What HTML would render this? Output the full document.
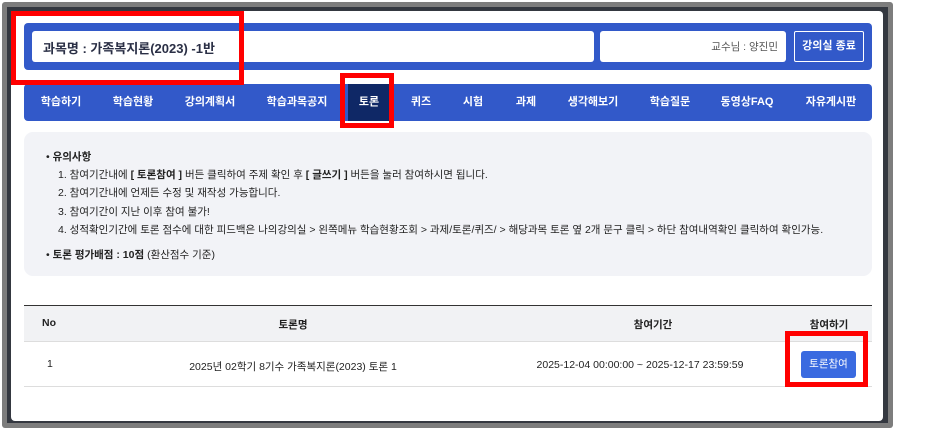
<!DOCTYPE html>
<html><head><meta charset="utf-8">
<style>
*{margin:0;padding:0;box-sizing:border-box}
body{width:934px;height:432px;background:#fff;position:relative;overflow:hidden;font-family:"Liberation Sans","Noto Sans CJK KR",sans-serif;color:#222}
.a{position:absolute}
.frame{left:2px;top:2px;width:891px;height:426px;background:#7d7d7d;border-radius:3px}
.dark{left:7px;top:7px;width:881px;height:416px;background:#343840}
.white{left:11px;top:11px;width:872px;height:410px;background:#fff;border-radius:4px}
.hdr{left:24px;top:23px;width:848px;height:47px;background:#3259c9;border-radius:4px}
.box{background:#fff;border-radius:3px;top:31px;height:31px}
.nav{left:24px;top:84px;width:848px;height:37px;background:#3259c9;border-radius:4px}
.ni{top:84px;height:37px;line-height:37px;color:#fff;font-size:11px;font-weight:bold;transform:translateX(-50%);white-space:nowrap}
.note{left:24px;top:132px;width:848px;height:144px;background:#f2f3f7;border-radius:9px}
.t{font-size:10.5px;white-space:nowrap;color:#222}
.red{border:5px solid #f00}
</style></head><body>
<div class="a frame"></div><div class="a dark"></div><div class="a white"></div>
<div class="a hdr"></div>
<div class="a box" style="left:32px;width:562px"></div>
<div class="a" style="left:43px;top:38px;font-size:13px;font-weight:bold;color:#2a2f45">과목명 : 가족복지론(2023) -1반</div>
<div class="a box" style="left:600px;width:186px"></div>
<div class="a" style="left:690px;top:39px;width:88px;text-align:right;font-size:10.5px;color:#555">교수님 : 양진민</div>
<div class="a" style="left:794px;top:31px;width:70px;height:31px;border:1px solid #fff;border-radius:2px;color:#fff;font-size:11px;font-weight:bold;text-align:center;line-height:29px">강의실 종료</div>
<div class="a nav"></div>
<div class="a" style="left:348px;top:84px;width:42px;height:37px;background:#0f2866"></div>
<div class="a ni" style="left:61px">학습하기</div>
<div class="a ni" style="left:133px">학습현황</div>
<div class="a ni" style="left:210px">강의계획서</div>
<div class="a ni" style="left:297px">학습과목공지</div>
<div class="a ni" style="left:369px">토론</div>
<div class="a ni" style="left:421px">퀴즈</div>
<div class="a ni" style="left:473px">시험</div>
<div class="a ni" style="left:526px">과제</div>
<div class="a ni" style="left:593px">생각해보기</div>
<div class="a ni" style="left:670px">학습질문</div>
<div class="a ni" style="left:747px">동영상FAQ</div>
<div class="a ni" style="left:831px">자유게시판</div>
<div class="a note"></div>
<div class="a t" style="left:46px;top:149px">• <b>유의사항</b></div>
<div class="a t" style="left:58px;top:167px">1. 참여기간내에 <b>[ 토론참여 ]</b> 버든 클릭하여 주제 확인 후 <b>[ 글쓰기 ]</b> 버든을 눌러 참여하시면 됩니다.</div>
<div class="a t" style="left:58px;top:185px">2. 참여기간내에 언제든 수정 및 재작성 가능합니다.</div>
<div class="a t" style="left:58px;top:204px">3. 참여기간이 지난 이후 참여 불가!</div>
<div class="a t" style="left:58px;top:222px">4. 성적확인기간에 토론 점수에 대한 피드백은 나의강의실 &gt; 왼쪽메뉴 학습현황조회 &gt; 과제/토론/퀴즈/ &gt; 해당과목 토론 옆 2개 문구 클릭 &gt; 하단 참여내역확인 클릭하여 확인가능.</div>
<div class="a t" style="left:46px;top:247px">• <b>토론 평가배점 : 10점</b> (환산점수 기준)</div>
<div class="a" style="left:24px;top:305px;width:848px;height:1px;background:#333"></div>
<div class="a" style="left:24px;top:306px;width:848px;height:36px;background:#f1f2f4;border-bottom:1px solid #ddd"></div>
<div class="a" style="left:24px;top:386px;width:848px;height:1px;background:#ddd"></div>
<div class="a t" style="left:42px;top:317px;font-weight:bold">No</div>
<div class="a t" style="left:293px;top:317px;font-weight:bold;transform:translateX(-50%)">토론명</div>
<div class="a t" style="left:653px;top:317px;font-weight:bold;transform:translateX(-50%)">참여기간</div>
<div class="a t" style="left:829px;top:317px;font-weight:bold;transform:translateX(-50%)">참여하기</div>
<div class="a t" style="left:47px;top:358px">1</div>
<div class="a t" style="left:293px;top:359px;transform:translateX(-50%)">2025년 02학기 8기수 가족복지론(2023) 토론 1</div>
<div class="a t" style="left:640px;top:359px;transform:translateX(-50%)">2025-12-04 00:00:00 ~ 2025-12-17 23:59:59</div>
<div class="a" style="left:801px;top:351px;width:55px;height:27px;background:#3a6ae0;border-radius:3px;color:#fff;font-size:10.5px;text-align:center;line-height:27px">토론참여</div>
<div class="a red" style="left:11px;top:11px;width:233px;height:74px"></div>
<div class="a red" style="left:340px;top:73px;width:54px;height:55px"></div>
<div class="a red" style="left:785px;top:331px;width:83px;height:56px"></div>
</body></html>
